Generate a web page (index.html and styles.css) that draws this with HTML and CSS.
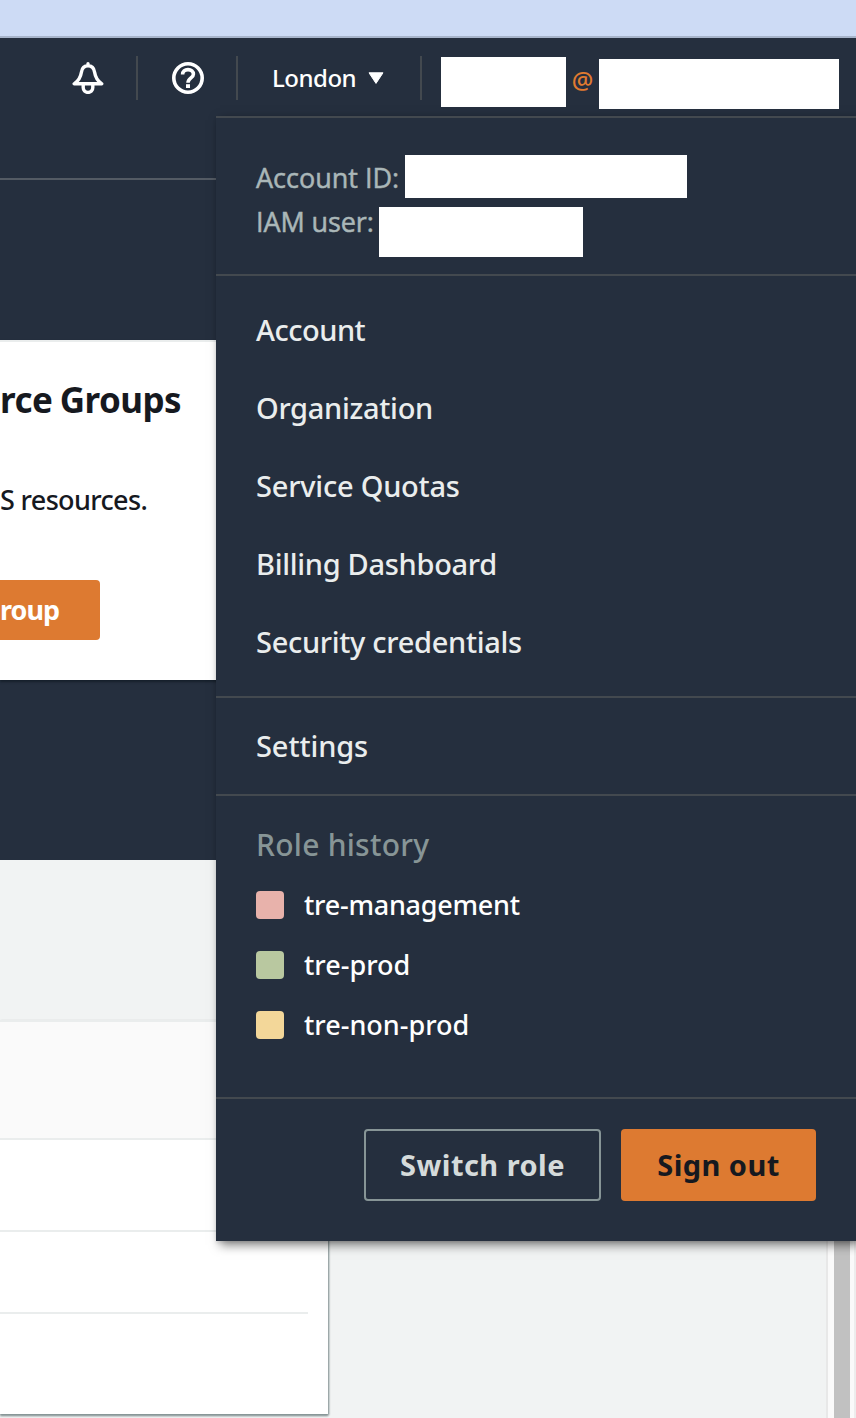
FILE: index.html
```html
<!DOCTYPE html>
<html lang="en">
<head>
<meta charset="utf-8">
<title>Console</title>
<link rel="stylesheet" href="styles.css">
</head>
<body>
<div class="page">
  <div class="browser-strip"></div>
  <header class="nav">
    <div class="nav-item bell">
      <svg class="icon" viewBox="0 0 16 16" fill="none" stroke="#fff" stroke-width="1.7" stroke-linejoin="round" stroke-linecap="round">
        <path d="M8 .9V1.5M8 1.9C6.2 1.9 5 3.2 4.7 5.1C4.3 7.8 3.3 9.4 1.1 10.9H14.9C12.7 9.4 11.7 7.8 11.3 5.1C11 3.2 9.8 1.9 8 1.9ZM5.6 11.2V12.8C5.6 14.3 6.6 15.2 8 15.2S10.4 14.3 10.4 12.8V11.2"/>
      </svg>
    </div>
    <div class="nav-item help">
      <svg class="icon" viewBox="0 0 16 16" fill="none" stroke="#fff">
        <circle cx="8" cy="8" r="7.1" stroke-width="1.8"/>
        <path d="M5.3 6.2C5.3 4.7 6.4 3.8 8 3.8S10.7 4.7 10.7 6.1C10.7 8 8 7.9 8 10.4" stroke-width="1.8"/>
        <path d="M8 11.1V13" stroke-width="2"/>
      </svg>
    </div>
    <div class="nav-item region"><span class="region-name">London</span>
      <svg class="caret" viewBox="0 0 16 12"><path d="M1 .8H15L8 11.4Z" fill="#fff" stroke="#fff" stroke-linejoin="round"/></svg>
    </div>
    <div class="nav-user">
      <span class="redacted name"></span><span class="at">@</span><span class="redacted alias"></span>
    </div>
  </header>
  <section class="hero">
    <div class="hero-line"></div>
    <div class="card">
      <h2 class="card-title">rce Groups</h2>
      <p class="card-text">S resources.</p>
      <span class="card-button">roup</span>
    </div>
  </section>
  <main class="content">
    <div class="table">
      <div class="row head"></div>
      <div class="row"></div>
      <div class="row short"></div>
      <div class="row last"></div>
    </div>
    <div class="scrollbar"><div class="thumb"></div></div>
  </main>

  <aside class="menu">
    <div class="identity">
      <div class="id-row"><span class="id-label account-id">Account ID:</span><span class="redacted id-value"></span></div>
      <div class="id-row user-row"><span class="id-label iam">IAM user:</span><span class="redacted user-value"></span></div>
    </div>
    <nav class="links">
      <a class="link l-account">Account</a>
      <a class="link l-org">Organization</a>
      <a class="link l-quotas">Service Quotas</a>
      <a class="link l-billing">Billing Dashboard</a>
      <a class="link l-security">Security credentials</a>
    </nav>
    <div class="settings"><a class="link l-settings">Settings</a></div>
    <div class="roles">
      <div class="roles-title">Role history</div>
      <div class="role"><span class="swatch red"></span><span class="role-name r-mgmt">tre-management</span></div>
      <div class="role"><span class="swatch green"></span><span class="role-name">tre-prod</span></div>
      <div class="role"><span class="swatch yellow"></span><span class="role-name">tre-non-prod</span></div>
    </div>
    <div class="actions">
      <span class="button switch">Switch role</span>
      <span class="button signout">Sign out</span>
    </div>
  </aside>
</div>
</body>
</html>
```
FILE: styles.css
```css
* { box-sizing: border-box; }
body { margin: 0; font-family: "Noto Sans", sans-serif; font-weight: 500; }
.page { position: relative; width: 856px; height: 1418px; overflow: hidden; display: flex; flex-direction: column; background: #f1f3f3; white-space: nowrap; }
.browser-strip { height: 38px; flex: none; background: #cddbf5; border-bottom: 2px solid #a7b4ca; }
.nav { height: 80px; flex: none; background: #252f3e; display: flex; align-items: flex-start; padding: 18px 0 0 38px; }
.nav-item { height: 44px; width: 100px; padding-left: 2px; display: flex; align-items: center; justify-content: center; border-right: 2px solid #43494f; }
.icon { width: 32px; height: 32px; display: block; }
.region { width: 184px; justify-content: flex-start; padding-left: 34px; color: #fff; }
.region-name { font-size: 24px; line-height: 44px; width: 96px; letter-spacing: -.5px; }
.caret { width: 16px; height: 12px; }
.nav-user { display: flex; align-items: flex-start; padding: 1px 0 0 19px; }
.redacted { display: block; background: #fff; }
.name { width: 125px; height: 50px; }
.at { width: 33px; text-align: center; color: #e07b30; font-size: 24px; line-height: 46px; }
.alias { width: 240px; height: 50px; margin-top: 2px; }
.hero { height: 742px; flex: none; background: #252f3e; padding-top: 60px; }
.hero-line { height: 2px; background: #545b64; margin-bottom: 160px; }
.card { height: 340px; width: 328px; background: #fff; border-top: 2px solid #eaeded; box-shadow: 0 2px 2px #16202b; color: #16191f; }
.card-title { margin: 0; padding-top: 34px; font-size: 35px; line-height: 48px; font-weight: 700; letter-spacing: -.55px; word-spacing: -1px; }
.card-text { margin: 0; padding-top: 57px; font-size: 27px; line-height: 38px; font-weight: 500; letter-spacing: -.65px; }
.card-button { display: block; margin-top: 61px; width: 100px; height: 60px; border-radius: 0 4px 4px 0; background: #dd7a31; color: #fff; font-size: 27px; line-height: 60px; font-weight: 700; letter-spacing: -1px; }
.content { flex: 1; display: flex; justify-content: space-between; }
.table { margin-top: 160px; width: 328px; height: 394px; background: #fff; box-shadow: 0 2px 2px #879596, 1px 1px 2px #879596; }
.row { border-bottom: 2px solid #eaeded; height: 92px; }
.head { height: 120px; background: #fafafa; border-top: 2px solid #eaeded; }
.short { height: 82px; margin-right: 20px; }
.last { border: 0; }
.scrollbar { width: 30px; background: #fafafa; border-left: 2px solid #e8e8e8; border-right: 2px solid #ededed; padding-left: 6px; }
.thumb { width: 16px; height: 100%; background: #c1c1c1; }

.menu { position: absolute; left: 216px; top: 116px; width: 640px; height: 1125px; background: #252f3e; border-top: 2px solid #43494f; box-shadow: 4px 4px 10px rgba(0,0,0,.5), 0 2px 3px rgba(0,0,0,.08); display: flex; flex-direction: column; }
.identity { height: 158px; border-bottom: 2px solid #43494f; padding: 37px 0 0 40px; }
.id-row { display: flex; align-items: flex-start; height: 44px; }
.id-label { color: #aab7b8; font-family: "Open Sans", "Noto Sans", sans-serif; font-size: 27px; line-height: 46px; font-weight: 400; -webkit-text-stroke: .5px #aab7b8; }
.account-id { width: 149px; }
.iam { width: 123px; letter-spacing: -.1px; }
.id-value { width: 282px; height: 43px; }
.user-value { width: 204px; height: 50px; margin-top: 8px; }
.links { height: 422px; padding: 15px 0 0 40px; border-bottom: 2px solid #43494f; }
.link { display: block; height: 78px; line-height: 78px; font-size: 29px; color: #eaeded; letter-spacing: -.3px; }
.l-account { letter-spacing: -.5px; }
.l-quotas { letter-spacing: -.22px; }
.l-settings { letter-spacing: -.1px; }
.settings { height: 98px; padding: 9px 0 0 40px; border-bottom: 2px solid #43494f; }
.roles { height: 303px; padding: 19px 0 0 40px; border-bottom: 2px solid #43494f; }
.roles-title { height: 60px; line-height: 60px; font-size: 30px; color: #879596; letter-spacing: .25px; }
.role { height: 60px; display: flex; align-items: center; gap: 20px; color: #fff; font-size: 27px; }
.role-name { padding-bottom: 2px; }
.r-mgmt { letter-spacing: -.25px; }
.swatch { width: 28px; height: 28px; border-radius: 4px; }
.red { background: #e8b2ab; }
.green { background: #b9c8a0; }
.yellow { background: #f3d799; }
.actions { display: flex; justify-content: flex-end; gap: 20px; padding: 30px 40px 0 0; }
.button { height: 72px; border-radius: 4px; text-align: center; font-weight: 700; font-size: 29px; line-height: 72px; letter-spacing: .45px; }
.switch { width: 237px; border: 2px solid #879596; line-height: 68px; color: #d5dbdb; }
.signout { width: 195px; background: #dd7a31; color: #16191f; }
```
